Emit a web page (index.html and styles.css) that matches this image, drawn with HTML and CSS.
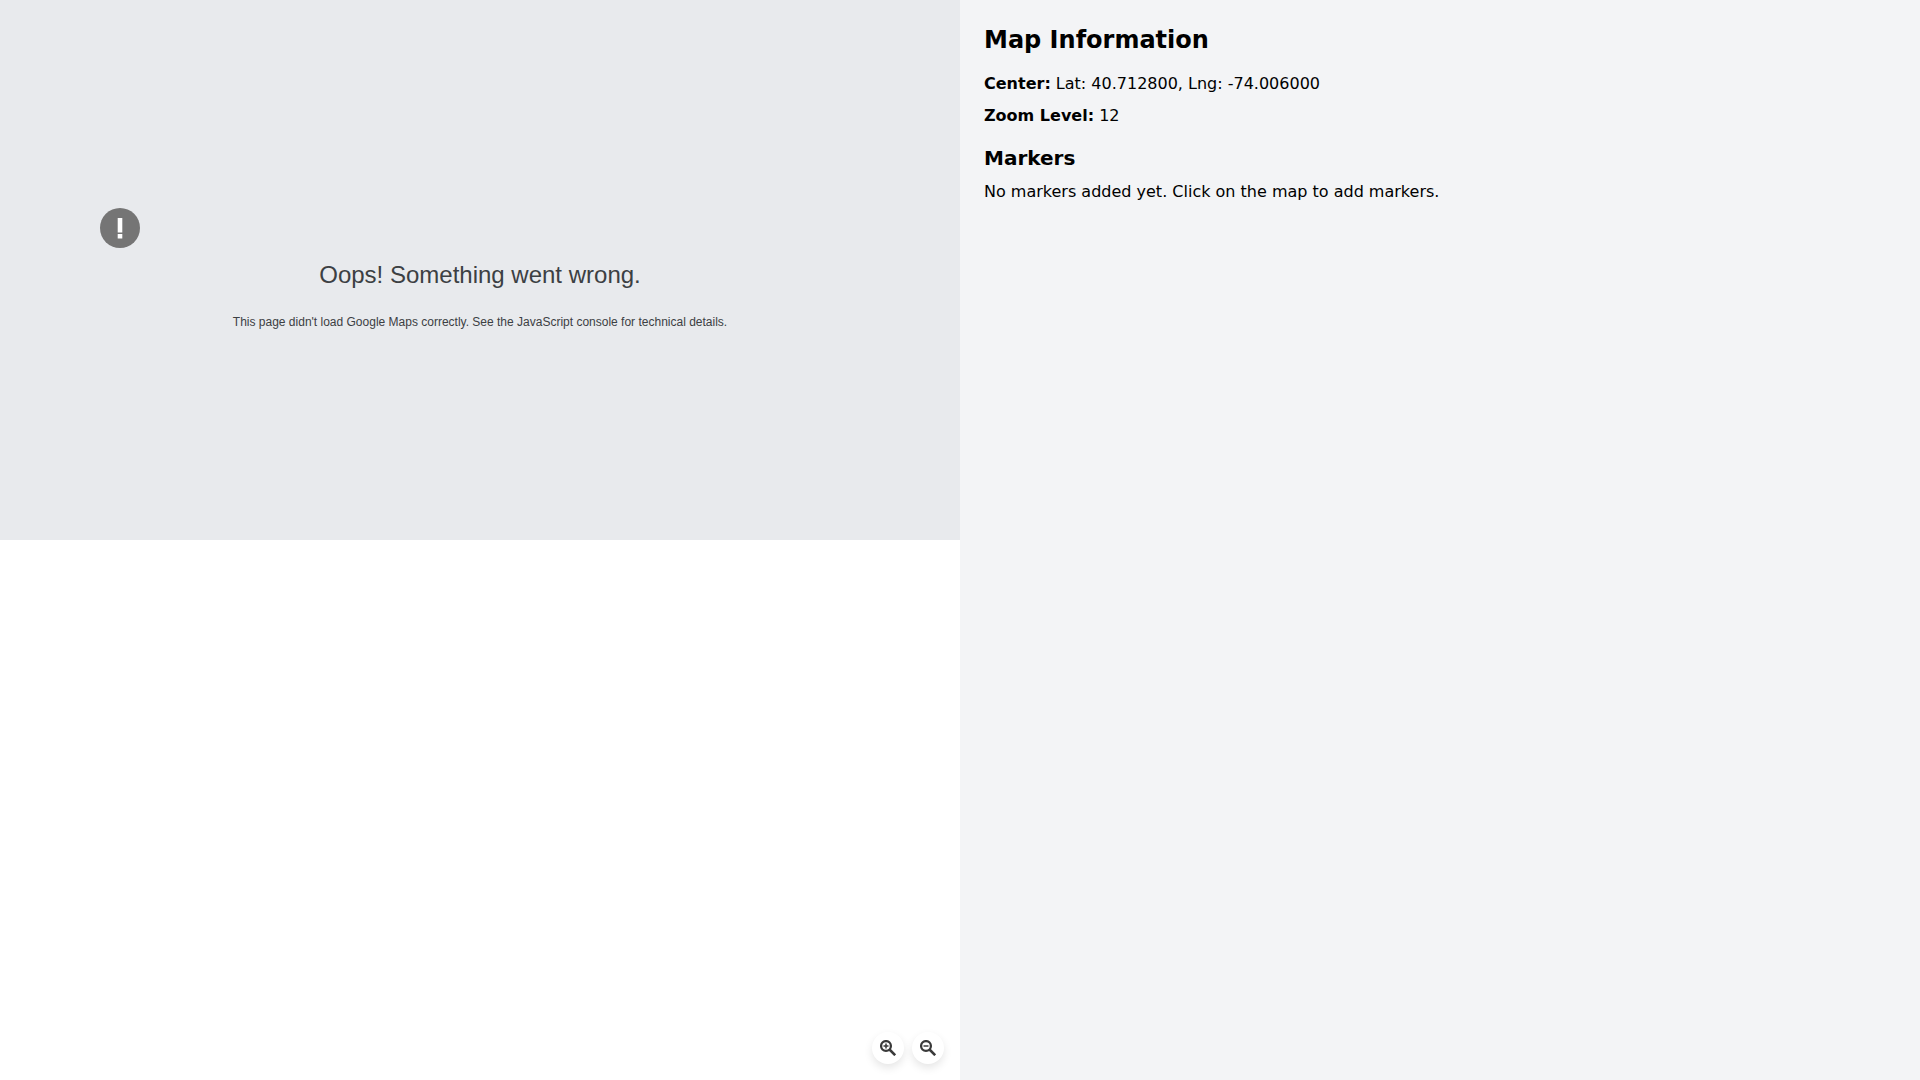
FILE: index.html
```html
<!DOCTYPE html>
<html lang="en">
<head>
  <meta charset="UTF-8" />
  <meta name="viewport" content="width=device-width, initial-scale=1.0"/>
  <title>Map Information</title>
  <link rel="stylesheet" href="styles.css">
</head>
<body>
  <div class="page">
    <section class="map-column">
      <div class="map-error">
        <div class="error-icon">
          <svg width="40" height="40" viewBox="0 0 40 40">
            <circle cx="20" cy="20" r="20" fill="#757575"/>
            <rect x="17.7" y="10" width="4.6" height="14.5" fill="#fff"/>
            <rect x="17.7" y="26" width="4.6" height="4.5" fill="#fff"/>
          </svg>
        </div>
        <div class="error-title">Oops! Something went wrong.</div>
        <div class="error-text">This page didn't load Google Maps correctly. See the JavaScript console for technical details.</div>
      </div>

      <div class="zoom-controls">
        <button class="zoom-btn" aria-label="Zoom in">
          <svg width="16" height="16" viewBox="0 0 16 16" fill="none" stroke="#3a3a3a">
            <circle cx="6" cy="6" r="4.9" stroke-width="2.3"/>
            <path d="M9.5 9.5L15.2 15.2" stroke-width="2.6"/>
            <path d="M6 3.5v5M3.5 6h5" stroke-width="1.5"/>
          </svg>
        </button>
        <button class="zoom-btn" aria-label="Zoom out">
          <svg width="16" height="16" viewBox="0 0 16 16" fill="none" stroke="#3a3a3a">
            <circle cx="6" cy="6" r="4.9" stroke-width="2.3"/>
            <path d="M9.5 9.5L15.2 15.2" stroke-width="2.6"/>
            <path d="M3.5 6h5" stroke-width="1.5"/>
          </svg>
        </button>
      </div>
    </section>

    <aside class="info-panel">
      <h2>Map Information</h2>
      <p><strong>Center:</strong> Lat: 40.712800, Lng: -74.006000</p>
      <p><strong>Zoom Level:</strong> 12</p>
      <h3>Markers</h3>
      <p>No markers added yet. Click on the map to add markers.</p>
    </aside>
  </div>
</body>
</html>
```

FILE: styles.css
```css
* {
  box-sizing: border-box;
}

body {
  margin: 0;
  font-family: "DejaVu Sans", sans-serif;
  color: #000;
  background: #fff;
}

.page {
  display: flex;
  height: 100vh;
  overflow: hidden;
}

.map-column {
  position: relative;
  width: 50%;
  background: #fff;
}

.map-error {
  display: flex;
  flex-direction: column;
  height: 540px;
  padding-top: 208px;
  background: #e8eaed;
  font-family: "Liberation Sans", Arial, sans-serif;
  color: #3c4043;
  text-align: center;
}

.error-icon {
  height: 40px;
  padding-left: 100px;
  text-align: left;
}

.error-title {
  margin-top: 13px;
  font-size: 24px;
  line-height: 28px;
}

.error-text {
  margin-top: 25px;
  font-size: 12px;
  line-height: 16px;
}

.zoom-controls {
  position: absolute;
  right: 16px;
  bottom: 16px;
  display: flex;
  gap: 8px;
}

.zoom-btn {
  display: flex;
  align-items: center;
  justify-content: center;
  width: 32px;
  height: 32px;
  padding: 0;
  border: none;
  border-radius: 50%;
  background: #fff;
  box-shadow: 0 4px 8px rgba(0, 0, 0, 0.1);
}

.info-panel {
  width: 50%;
  padding: 24px;
  background: #f3f4f6;
}

.info-panel h2 {
  margin: 0 0 16px;
  font-size: 24px;
  line-height: 32px;
}

.info-panel h3 {
  margin: 16px 0 8px;
  font-size: 20px;
  line-height: 28px;
}

.info-panel p {
  margin: 0 0 8px;
  font-size: 16px;
  line-height: 24px;
}
```
